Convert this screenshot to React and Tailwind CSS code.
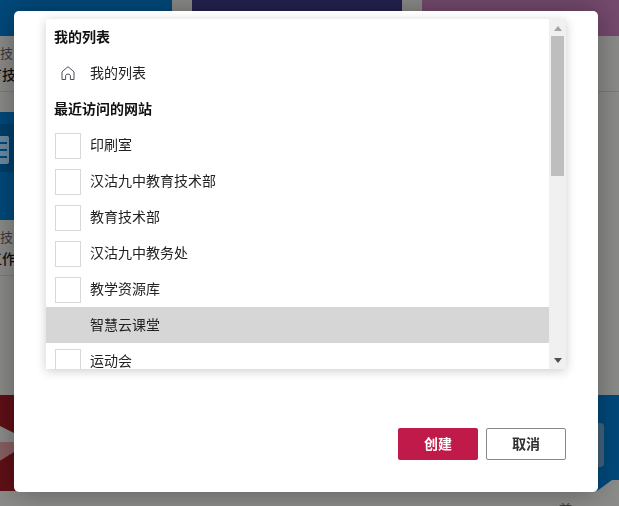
import React from "react";

const font = { fontFamily: '"Noto Sans CJK SC", "Liberation Sans", sans-serif' };

const recentSites = ["印刷室", "汉沽九中教育技术部", "教育技术部", "汉沽九中教务处", "教学资源库", "智慧云课堂", "运动会"];

function HomeIcon() {
  return (
    <svg width="16" height="16" viewBox="0 0 16 16" fill="none" stroke="#4a4f55" strokeWidth="1" strokeLinejoin="round">
      <path d="M2 14.5V6.8L8 1.7l6 5.1v7.7h-3.6v-3.6c0-1-.8-1.8-2.4-1.8s-2.4.8-2.4 1.8v3.6Z" />
    </svg>
  );
}

function ClipboardIcon() {
  return (
    <svg width="36" height="32" viewBox="0 0 36 32">
      <path d="M3 4h9l3-4h6l3 4h9a2 2 0 0 1 1 2v24a2 2 0 0 1-2 2H4a2 2 0 0 1-2-2V6a2 2 0 0 1 1-2Z" fill="#6d8aa3" />
      <path d="M8 11h24M8 18h24M8 25h24" stroke="#004a7c" strokeWidth="2" />
    </svg>
  );
}

function Caption({ first, second }) {
  return (
    <div className="h-14 pl-3 pt-[7px] border-b border-[#7c7c7b] overflow-hidden whitespace-nowrap">
      <div className="text-[13px] leading-5 text-[#3c3c3c]">{first}</div>
      <div className="text-sm leading-[22px] font-medium text-[#111]">{second}</div>
    </div>
  );
}

function Background() {
  return (
    <div className="-ml-[38px] -mt-[72px] w-[670px]">
      <div className="grid grid-cols-[repeat(3,210px)] gap-x-5">
        <div>
          <div className="h-[108px] bg-[#004a7c]" />
          <Caption first="教育技术部" second="教育技术" />
        </div>
        <div>
          <div className="h-[108px] bg-[#25224f]" />
          <Caption first="教育技术部" second="教育技术" />
        </div>
        <div>
          <div className="h-[108px] bg-[#754a6e]" />
          <Caption first="教育技术部" second="教育技术" />
        </div>
      </div>

      <div className="grid grid-cols-[repeat(3,210px)] gap-x-5 mt-5">
        <div>
          <div className="h-[108px] bg-[#004a7c] pt-3">
            <div className="h-12 bg-[#003f6b] flex items-center pl-[13px]">
              <ClipboardIcon />
            </div>
          </div>
          <Caption first="教育技术部" second="教工作" />
        </div>
        <div>
          <div className="h-[108px] bg-[#25224f]" />
          <Caption first="教育技术部" second="教工作" />
        </div>
      </div>

      <div className="grid grid-cols-[repeat(3,210px)] gap-x-5 mt-[119px]">
        <div className="h-24 bg-[#5f1016] relative">
          <svg width="210" height="96" className="absolute inset-0">
            <polygon points="20,22 60,42 60,47 20,47" fill="#8d8d8d" />
            <polygon points="20,47 60,47 60,52 20,77" fill="#8a6064" />
          </svg>
        </div>
        <div className="h-24 bg-[#25224f]" />
        <div>
          <div className="h-24 bg-[#004a7c] pt-7 flex justify-end pr-7 [clip-path:polygon(0_0,100%_0,100%_85px,190px_85px,175px_100%,0_100%)]">
            <div className="h-11 w-20 rounded bg-[#45657f]" />
          </div>
          <div className="pl-[137px] pt-2 text-[13px] leading-5 text-[#3c3c3c]">首</div>
        </div>
      </div>
    </div>
  );
}

function ListRow({ label, active, children }) {
  return (
    <div className={`h-9 shrink-0 flex items-center text-sm text-[#222] ${active ? "bg-[#d6d6d6]" : ""}`}>
      <div className="w-11 shrink-0 pl-[9px]">{children}</div>
      <span className="pb-[2px]">{label}</span>
    </div>
  );
}

function SiteBox() {
  return <div className="w-[26px] h-[26px] mt-[2px] border border-[#d8d8d8]" />;
}

function Scrollbar() {
  return (
    <div className="w-[17px] shrink-0 bg-[#f0f0f0] flex flex-col items-center">
      <div className="h-[17px] flex items-center justify-center">
        <div className="w-0 h-0 mt-[1px] border-x-4 border-x-transparent border-b-[5px] border-b-[#a3a3a3]" />
      </div>
      <div className="w-[13px] h-[140px] bg-[#bebebe]" />
      <div className="flex-1" />
      <div className="h-[17px] flex items-center justify-center">
        <div className="w-0 h-0 border-x-4 border-x-transparent border-t-[5px] border-t-[#505050]" />
      </div>
    </div>
  );
}

export default function App() {
  return (
    <div className="relative h-screen overflow-hidden bg-[#8c8c8a]" style={font}>
      <Background />

      <div className="fixed inset-0 pl-[14px] pt-[11px]">
        <div className="w-[584px] h-[481px] bg-white rounded-[5px] px-8 pt-2 shadow-[0_0_30px_rgba(0,0,0,0.35)]">
          <div className="h-[350px] flex bg-white shadow-[0_2px_10px_rgba(0,0,0,0.2)]">
            <div className="flex-1 overflow-hidden flex flex-col">
              <div className="h-9 shrink-0 flex items-center pl-2 pb-[2px] text-sm font-bold text-[#111]">我的列表</div>
              <ListRow label="我的列表">
                <div className="pl-[5px]">
                  <HomeIcon />
                </div>
              </ListRow>
              <div className="h-9 shrink-0 flex items-center pl-2 pb-[2px] text-sm font-bold text-[#111]">最近访问的网站</div>
              {recentSites.map((site) => (
                <ListRow key={site} label={site} active={site === "智慧云课堂"}>
                  {site !== "智慧云课堂" && <SiteBox />}
                </ListRow>
              ))}
            </div>
            <Scrollbar />
          </div>

          <div className="mt-[59px] flex justify-end gap-2">
            <button className="w-20 h-8 pb-[2px] rounded-[2px] bg-[#bf1a49] text-white text-sm font-bold">创建</button>
            <button className="w-20 h-8 pb-[2px] rounded-[2px] bg-white border border-[#8a8886] text-[#323130] text-sm font-bold">取消</button>
          </div>
        </div>
      </div>
    </div>
  );
}
